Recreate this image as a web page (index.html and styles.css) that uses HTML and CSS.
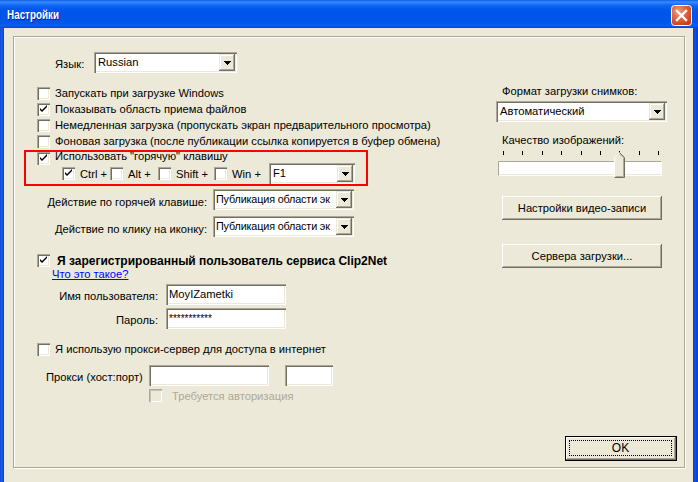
FILE: index.html
```html
<!DOCTYPE html>
<html lang="ru">
<head>
<meta charset="utf-8">
<title>Настройки</title>
<link rel="stylesheet" href="styles.css">
</head>
<body>
<div class="window">
  <div class="titlebar">
    <span class="title">Настройки</span>
    <span class="close">
      <svg width="21" height="21" viewBox="0 0 21 21">
        <defs>
          <radialGradient id="cg" cx="35%" cy="30%" r="80%">
            <stop offset="0" stop-color="#F39B7C"/>
            <stop offset="0.5" stop-color="#E2603A"/>
            <stop offset="1" stop-color="#C43A17"/>
          </radialGradient>
        </defs>
        <rect x="0.5" y="0.5" width="20" height="20" rx="3" fill="url(#cg)" stroke="#fff"/>
        <path d="M6 6L15 15M15 6L6 15" stroke="#fff" stroke-width="2.4" stroke-linecap="square"/>
      </svg>
    </span>
  </div>
  <div class="client">
    <div class="group">
      <div class="top">
        <div class="left">
          <div class="lang-row">
            <span class="lang-label">Язык:</span>
            <div class="combo combo-lang"><span class="combo-text">Russian</span><span class="drop"><svg width="7" height="4" viewBox="0 0 7 4"><path d="M0 0h7v1h-1v1h-1v1h-1v1h-1v-1h-1v-1h-1v-1h-1z" fill="#000"/></svg></span></div>
          </div>
          <div class="checks">
            <div class="crow"><span class="cb"></span><span class="ctext">Запускать при загрузке Windows</span></div>
            <div class="crow"><span class="cb"><svg width="13" height="13" viewBox="0 0 13 13"><path d="M3 5v2l2 2l5-5v-2l-5 5z" fill="#000"/></svg></span><span class="ctext">Показывать область приема файлов</span></div>
            <div class="crow"><span class="cb"></span><span class="ctext">Немедленная загрузка (пропускать экран предварительного просмотра)</span></div>
            <div class="crow"><span class="cb"></span><span class="ctext">Фоновая загрузка (после публикации ссылка копируется в буфер обмена)</span></div>
          </div>
          <div class="hotbox">
            <div class="hot-row1"><span class="cb"><svg width="13" height="13" viewBox="0 0 13 13"><path d="M3 5v2l2 2l5-5v-2l-5 5z" fill="#000"/></svg></span><span class="ctext">Использовать "горячую" клавишу</span></div>
            <div class="hot-row2">
              <span class="key key-ctrl"><span class="cb"><svg width="13" height="13" viewBox="0 0 13 13"><path d="M3 5v2l2 2l5-5v-2l-5 5z" fill="#000"/></svg></span><span class="ktext">Ctrl +</span></span>
              <span class="key key-alt"><span class="cb"></span><span class="ktext">Alt +</span></span>
              <span class="key key-shift"><span class="cb"></span><span class="ktext">Shift +</span></span>
              <span class="key key-win"><span class="cb"></span><span class="ktext">Win +</span></span>
              <div class="combo combo-key"><span class="combo-text">F1</span><span class="drop"><svg width="7" height="4" viewBox="0 0 7 4"><path d="M0 0h7v1h-1v1h-1v1h-1v1h-1v-1h-1v-1h-1v-1h-1z" fill="#000"/></svg></span></div>
            </div>
          </div>
          <div class="act-row act-1">
            <span class="act-label">Действие по горячей клавише:</span>
            <div class="combo combo-act"><span class="combo-text">Публикация области эк</span><span class="drop"><svg width="7" height="4" viewBox="0 0 7 4"><path d="M0 0h7v1h-1v1h-1v1h-1v1h-1v-1h-1v-1h-1v-1h-1z" fill="#000"/></svg></span></div>
          </div>
          <div class="act-row act-2">
            <span class="act-label">Действие по клику на иконку:</span>
            <div class="combo combo-act"><span class="combo-text">Публикация области эк</span><span class="drop"><svg width="7" height="4" viewBox="0 0 7 4"><path d="M0 0h7v1h-1v1h-1v1h-1v1h-1v-1h-1v-1h-1v-1h-1z" fill="#000"/></svg></span></div>
          </div>
          <div class="reg-row"><span class="cb"><svg width="13" height="13" viewBox="0 0 13 13"><path d="M3 5v2l2 2l5-5v-2l-5 5z" fill="#000"/></svg></span><span class="reg-text">Я зарегистрированный пользователь сервиса Clip2Net</span></div>
          <div class="link-row"><a class="link" href="#">Что это такое?</a></div>
          <div class="field-row field-user">
            <span class="field-label">Имя пользователя:</span>
            <div class="input input-user"><span class="input-text">MoyIZametki</span></div>
          </div>
          <div class="field-row field-pass">
            <span class="field-label">Пароль:</span>
            <div class="input input-user"><span class="input-text pass">***********</span></div>
          </div>
          <div class="proxy-check"><span class="cb"></span><span class="ctext">Я использую прокси-сервер для доступа в интернет</span></div>
          <div class="proxy-row">
            <span class="proxy-label">Прокси (хост:порт)</span>
            <div class="input input-host"></div>
            <div class="input input-port"></div>
          </div>
          <div class="auth-row"><span class="cb cb-disabled"></span><span class="auth-text">Требуется авторизация</span></div>
        </div>
        <div class="right">
          <div class="r-label r-label-1">Формат загрузки снимков:</div>
          <div class="combo combo-fmt"><span class="combo-text">Автоматический</span><span class="drop"><svg width="7" height="4" viewBox="0 0 7 4"><path d="M0 0h7v1h-1v1h-1v1h-1v1h-1v-1h-1v-1h-1v-1h-1z" fill="#000"/></svg></span></div>
          <div class="r-label r-label-2">Качество изображений:</div>
          <div class="slider">
            <div class="ticks">
              <span class="tick"></span><span class="tick"></span><span class="tick"></span><span class="tick"></span><span class="tick"></span><span class="tick"></span><span class="tick"></span><span class="tick"></span><span class="tick"></span>
            </div>
            <div class="track"></div>
            <svg class="thumb" width="11" height="26" viewBox="0 0 11 26">
              <path d="M0.5 25.5V5.5L5.5 0.5L10.5 5.5V25.5Z" fill="#ECE9D8"/>
              <path d="M0.5 25V5.5L5.5 0.5" fill="none" stroke="#fff"/>
              <path d="M5.5 0.5L10.5 5.5V25.5H0.5" fill="none" stroke="#716F64"/>
              <path d="M5.5 1.9L9.5 5.9V24.5H1.5" fill="none" stroke="#ACA899"/>
            </svg>
          </div>
          <div class="btn btn-video">Настройки видео-записи</div>
          <div class="btn btn-servers">Сервера загрузки...</div>
        </div>
      </div>
      <div class="footer">
        <div class="btn-ok"><span class="focus">OK</span></div>
      </div>
    </div>
  </div>
</div>
</body>
</html>
```
FILE: styles.css
```css
* { box-sizing: border-box; }

body {
  margin: 0;
  width: 698px;
  height: 482px;
  overflow: hidden;
  font-family: "Liberation Sans", Arial, sans-serif;
  font-size: 11.2px;
  color: #000;
  background: #2f7d22;
}

.window {
  width: 698px;
  height: 482px;
  display: flex;
  flex-direction: column;
  background: linear-gradient(to right, #0A3CC8 0, #1A5FEA 1px, #0B51E4 3px, #0A3CC8 4px, #0A47DA 50%, #0A3CC8 calc(100% - 5px), #0B51E4 calc(100% - 3px), #083ACF 100%);
}

.titlebar {
  height: 28px;
  flex: none;
  display: flex;
  align-items: center;
  padding: 0 6px 0 7px;
  background: linear-gradient(to bottom, #0A5EEB 0, #3A8DF9 2px, #1468F4 5px, #0058EE 9px, #0054E8 50%, #0055EA 80%, #0A5FF0 92%, #0046CC 100%);
}

.title {
  flex: 1;
  color: #fff;
  font-family: "Liberation Sans", sans-serif;
  font-weight: bold;
  font-size: 13px;
  text-shadow: 1px 1px 0 #0A1E8A;
  padding-top: 1px;
  transform: scaleX(0.76);
  transform-origin: left center;
}

.close {
  width: 21px;
  height: 21px;
  display: block;
  margin-top: 2px;
}
.close svg { display: block; }

.client {
  flex: 1;
  margin: 0 5px 0 4px;
  background: #ECE9D8;
  padding: 8px 8px 0 9px;
}

.group {
  height: 432px;
  border: 1px solid #ACA899;
  box-shadow: inset 1px 1px 0 #fff, 1px 1px 0 #fff;
  display: flex;
  flex-direction: column;
}

.top {
  display: flex;
}

.left {
  padding-left: 10px;
  padding-top: 15px;
  width: 420px;
  display: flex;
  flex-direction: column;
}

/* generic controls */
.cb {
  width: 13px;
  height: 13px;
  flex: none;
  display: block;
  background: #fff;
  box-shadow: inset 1px 1px 0 #ACA899, inset 2px 2px 0 #716F64, inset -1px -1px 0 #fff, inset -2px -2px 0 #ECE9D8;
}
.cb svg { display: block; }
.cb-disabled { background: #ECE9D8; box-shadow: inset 1px 1px 0 #ACA899, inset 2px 2px 0 #C7C3B2, inset -1px -1px 0 #fff, inset -2px -2px 0 #ECE9D8; }

.combo {
  height: 21px;
  background: #fff;
  box-shadow: inset 1px 1px 0 #ACA899, inset 2px 2px 0 #716F64, inset -1px -1px 0 #fff, inset -2px -2px 0 #ECE9D8;
  display: flex;
  align-items: center;
  padding: 2px;
}
.combo-text {
  flex: 1;
  padding-left: 2px;
  white-space: nowrap;
  overflow: hidden;
  line-height: 15px;
}
.drop {
  width: 16px;
  height: 17px;
  flex: none;
  background: #ECE9D8;
  box-shadow: inset -1px -1px 0 #716F64, inset 1px 1px 0 #ECE9D8, inset -2px -2px 0 #ACA899, inset 2px 2px 0 #fff;
  display: flex;
  align-items: center;
  justify-content: center;
}
.drop svg { display: block; }

.input {
  height: 21px;
  background: #fff;
  box-shadow: inset 1px 1px 0 #ACA899, inset 2px 2px 0 #716F64, inset -1px -1px 0 #fff, inset -2px -2px 0 #ECE9D8;
  padding: 3px 3px 0 3px;
  line-height: 14px;
  white-space: nowrap;
  overflow: hidden;
}

/* language */
.lang-row {
  display: flex;
  align-items: center;
  height: 21px;
  padding-left: 31px;
}
.lang-label { width: 39px; padding-top: 3px; }
.combo-lang { width: 143px; }

/* checks */
.checks { margin-top: 13px; }
.crow {
  height: 16px;
  display: flex;
  align-items: flex-start;
  padding-left: 13px;
}
.crow .cb { margin-top: 1px; }
.ctext { margin-left: 5px; white-space: nowrap; line-height: 15px; }

/* hotkey box (red annotation) */
.hotbox {
  width: 344px;
  height: 36px;
  border: 2px solid #FF0000;
}
.hot-row1 {
  height: 11px;
  display: flex;
  align-items: flex-start;
  padding-left: 11px;
}
.hot-row1 .ctext { line-height: 11px; margin-top: -1px; }
.hot-row2 {
  height: 21px;
  display: flex;
  align-items: center;
  padding-left: 36px;
}
.key { display: flex; align-items: center; flex: none; }
.ktext { margin-left: 5px; white-space: nowrap; }
.key-ctrl { width: 48px; }
.key-alt { width: 48px; }
.key-shift { width: 56px; }
.key-win { width: 55px; }
.combo-key { width: 86px; }

/* actions */
.act-row {
  display: flex;
  align-items: center;
  height: 21px;
}
.act-1 { margin-top: 3px; }
.act-2 { margin-top: 6px; }
.act-label {
  width: 183px;
  text-align: right;
  white-space: nowrap;
  padding-top: 4px;
  margin-right: 6px;
}
.combo-act { width: 141px; }
.combo-act .combo-text { font-size: 10.8px; letter-spacing: -0.15px; padding-left: 1px; }

/* registered */
.reg-row {
  margin-top: 17px;
  height: 13px;
  display: flex;
  align-items: center;
  padding-left: 13px;
}
.reg-text { margin-left: 7px; font-weight: bold; white-space: nowrap; font-size: 12px; }

.link-row { margin-top: 1px; height: 13px; padding-left: 28px; line-height: 13px; }
.link { color: #0000FF; text-decoration: underline; }

.field-row {
  display: flex;
  align-items: center;
  height: 21px;
  margin-top: 3px;
}
.field-label { width: 134px; text-align: right; margin-right: 8px; padding-top: 3px; white-space: nowrap; }
.input-user { width: 120px; }
.pass { font-size: 10px; }

.proxy-check {
  margin-top: 14px;
  height: 13px;
  display: flex;
  align-items: center;
  padding-left: 13px;
}
.proxy-row {
  margin-top: 9px;
  display: flex;
  align-items: center;
  height: 21px;
  padding-left: 22px;
}
.proxy-label { width: 103px; white-space: nowrap; padding-top: 3px; }
.input-host { width: 120px; }
.input-port { width: 48px; margin-left: 16px; }

.auth-row {
  margin-top: 3px;
  height: 13px;
  display: flex;
  align-items: center;
  padding-left: 125px;
}
.auth-text { margin-left: 10px; color: #ACA899; white-space: nowrap; }

/* right column */
.right {
  margin-left: auto;
  margin-right: 17px;
  width: 171px;
  padding-top: 48px;
  display: flex;
  flex-direction: column;
}
.r-label { height: 13px; line-height: 13px; padding-left: 6px; white-space: nowrap; }
.combo-fmt { margin-top: 3px; width: 171px; }
.r-label-2 { margin-top: 12px; }

.slider {
  position: relative;
  margin-top: 4px;
  margin-left: 2px;
  width: 164px;
  height: 27px;
}
.ticks {
  height: 4px;
  display: flex;
  justify-content: space-between;
  padding: 0 3px 0 5px;
}
.tick { width: 1px; height: 4px; background: #000; }
.track {
  margin-top: 6px;
  height: 15px;
  background: #fff;
  border-top: 1px solid #ACA899;
  border-left: 1px solid #ACA899;
  border-right: 1px solid #fff;
  border-bottom: 1px solid #fff;
  box-shadow: inset 0 -1px 0 #ECE9D8;
}
.thumb {
  position: absolute;
  left: 116px;
  top: 1px;
  display: block;
}

.btn {
  margin-left: 6px;
  width: 160px;
  height: 24px;
  background: #ECE9D8;
  box-shadow: inset -1px -1px 0 #716F64, inset 1px 1px 0 #fff, inset -2px -2px 0 #ACA899;
  display: flex;
  align-items: center;
  justify-content: center;
  white-space: nowrap;
}
.btn-video { margin-top: 18px; }
.btn-servers { margin-top: 24px; }

.footer {
  margin-top: auto;
  display: flex;
  justify-content: flex-end;
  padding-right: 7px;
  padding-bottom: 6px;
}
.btn-ok {
  width: 112px;
  height: 25px;
  border: 1px solid #000;
  background: #ECE9D8;
  box-shadow: inset -1px -1px 0 #716F64, inset 1px 1px 0 #fff, inset -2px -2px 0 #ACA899;
  padding: 3px 4px 4px 3px;
  display: flex;
}
.focus {
  flex: 1;
  border: 1px dotted #000;
  display: flex;
  align-items: center;
  justify-content: center;
  font-size: 12px;
}
```
